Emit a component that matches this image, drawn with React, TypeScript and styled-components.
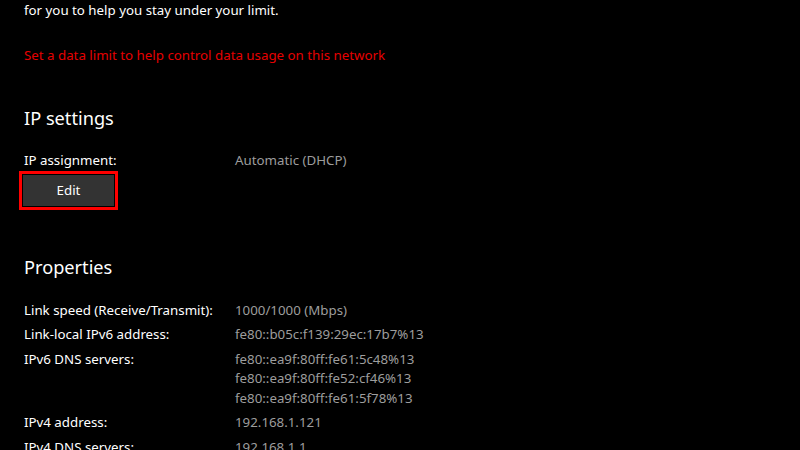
import React from "react";
import styled, { createGlobalStyle } from "styled-components";

const Global = createGlobalStyle`
  html, body { margin: 0; padding: 0; background: #000; }
  body { overflow: hidden; font-family: "Noto Sans", "Open Sans", sans-serif; }
`;

const Page = styled.div`
  width: 800px;
  height: 450px;
  overflow: hidden;
  background: #000;
  color: #fff;
`;

const Content = styled.div`
  display: flex;
  flex-direction: column;
  padding-left: 24px;
  margin-top: -20px;
`;

const Paragraph = styled.p`
  margin: 0;
  white-space: nowrap;
  font-size: 13.3px;
  line-height: 20px;
  color: #fff;
`;

const Link = styled.a`
  margin-top: 25px;
  align-self: flex-start;
  font-size: 13.3px;
  line-height: 20px;
  color: #e60000;
  text-decoration: none;
`;

const Heading = styled.h2<{ $gap: number }>`
  margin: ${(p) => p.$gap}px 0 0;
  font-size: 18.2px;
  font-weight: 400;
  line-height: 28px;
  color: #fff;
`;

const Rows = styled.div<{ $gap: number }>`
  margin-top: ${(p) => p.$gap}px;
  display: flex;
  flex-direction: column;
  gap: 5px;
`;

const Row = styled.div`
  display: grid;
  grid-template-columns: 211px 1fr;
  font-size: 13.3px;
  line-height: 19.5px;
`;

const Label = styled.span`
  color: #fff;
`;

const Values = styled.span`
  display: flex;
  flex-direction: column;
  color: #9d9d9d;
`;

const EditButton = styled.button`
  margin: 4px 0 0 -1px;
  width: 91px;
  height: 31px;
  border: none;
  background: #333;
  color: #fff;
  font-family: inherit;
  font-size: 13.3px;
  outline: 3px solid #ff0000;
  outline-offset: 1px;
  padding: 0;
`;

const props: [string, string[]][] = [
  ["Link speed (Receive/Transmit):", ["1000/1000 (Mbps)"]],
  ["Link-local IPv6 address:", ["fe80::b05c:f139:29ec:17b7%13"]],
  [
    "IPv6 DNS servers:",
    [
      "fe80::ea9f:80ff:fe61:5c48%13",
      "fe80::ea9f:80ff:fe52:cf46%13",
      "fe80::ea9f:80ff:fe61:5f78%13",
    ],
  ],
  ["IPv4 address:", ["192.168.1.121"]],
  ["IPv4 DNS servers:", ["192.168.1.1"]],
];

export default function App() {
  return (
    <Page>
      <Global />
      <Content>
        <Paragraph>
          If you set a data limit, Windows will set the metered connection setting
          <br />
          for you to help you stay under your limit.
        </Paragraph>
        <Link href="#">Set a data limit to help control data usage on this network</Link>
        <Heading $gap={39}>IP settings</Heading>
        <Rows $gap={19}>
          <Row>
            <Label>IP assignment:</Label>
            <Values>
              <span>Automatic (DHCP)</span>
            </Values>
          </Row>
        </Rows>
        <div>
          <EditButton>Edit</EditButton>
        </div>
        <Heading $gap={47}>Properties</Heading>
        <Rows $gap={20}>
          {props.map(([l, v]) => (
            <Row key={l}>
              <Label>{l}</Label>
              <Values>
                {v.map((x) => (
                  <span key={x}>{x}</span>
                ))}
              </Values>
            </Row>
          ))}
        </Rows>
      </Content>
    </Page>
  );
}
